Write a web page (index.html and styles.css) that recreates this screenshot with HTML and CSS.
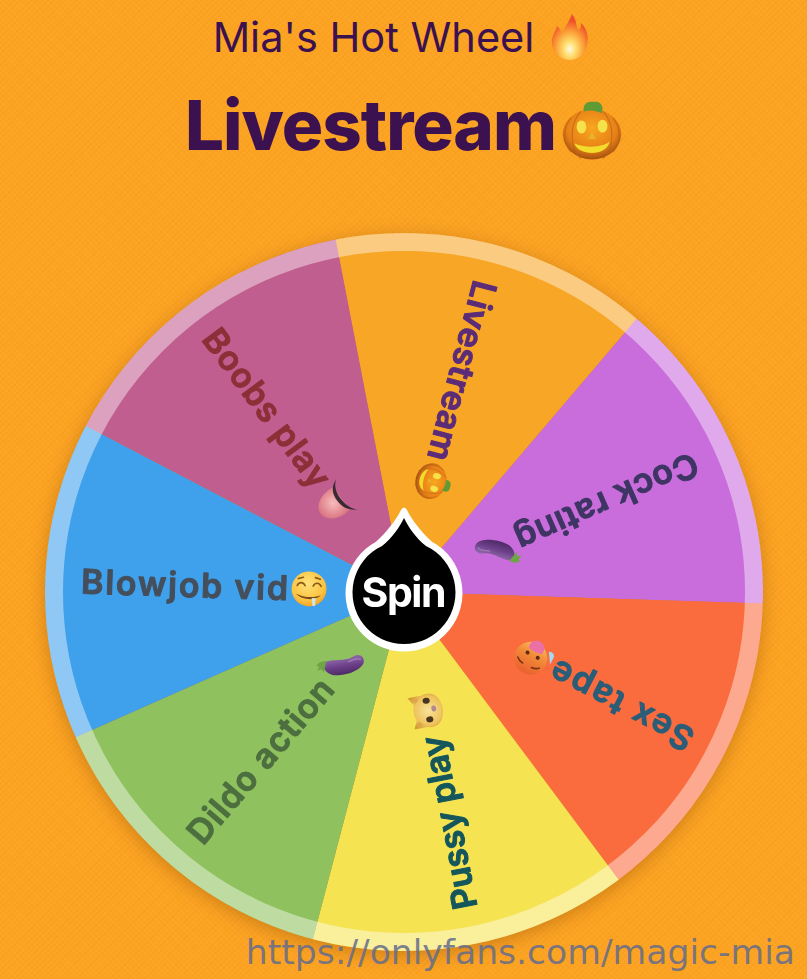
FILE: index.html
```html
<!DOCTYPE html>
<html lang="en">
<head>
    <meta charset="UTF-8">
    <meta name="viewport" content="width=device-width, initial-scale=1.0">
    <title>Mia's Hot Wheel</title>
    <link rel="stylesheet" href="styles.css">
</head>
<body>
    <!-- shared emoji drawings, each about 36 units wide around 0,0 -->
    <svg class="sprite" aria-hidden="true">
        <defs>
            <radialGradient id="pumpkinSkin" cx="50%" cy="38%" r="62%">
                <stop offset="0" stop-color="#f9a620"/>
                <stop offset="0.68" stop-color="#e88116"/>
                <stop offset="1" stop-color="#a4500f"/>
            </radialGradient>
            <linearGradient id="eggSkin" x1="0" y1="0" x2="0" y2="1">
                <stop offset="0" stop-color="#8f6aa8"/>
                <stop offset="0.5" stop-color="#6d3f8a"/>
                <stop offset="1" stop-color="#4c2a63"/>
            </linearGradient>
            <radialGradient id="faceSkin" cx="45%" cy="35%" r="70%">
                <stop offset="0" stop-color="#ffe27a"/>
                <stop offset="0.7" stop-color="#fbc23f"/>
                <stop offset="1" stop-color="#ef9a22"/>
            </radialGradient>
            <linearGradient id="hotSkin" x1="0" y1="0" x2="0" y2="1">
                <stop offset="0" stop-color="#e9602f"/>
                <stop offset="0.6" stop-color="#f28a38"/>
                <stop offset="1" stop-color="#f9bb58"/>
            </linearGradient>
            <radialGradient id="catSkin" cx="50%" cy="55%" r="60%">
                <stop offset="0" stop-color="#f8e29a"/>
                <stop offset="0.7" stop-color="#eec35c"/>
                <stop offset="1" stop-color="#d79c38"/>
            </radialGradient>
            <radialGradient id="tongueSkin" cx="45%" cy="40%" r="60%">
                <stop offset="0" stop-color="#f7bcbc"/>
                <stop offset="1" stop-color="#d9727f"/>
            </radialGradient>
            <radialGradient id="fireCore" cx="50%" cy="76%" r="62%">
                <stop offset="0" stop-color="#fffbe0"/>
                <stop offset="0.28" stop-color="#ffdc6a"/>
                <stop offset="0.65" stop-color="#fb9a35"/>
                <stop offset="1" stop-color="#ef4f2c"/>
            </radialGradient>

            <g id="pumpkin">
                <ellipse cx="0" cy="0" rx="18" ry="15.5" fill="url(#pumpkinSkin)"/>
                <path class="pumpkin-stem" d="M-5 -14 C-6 -18 -3 -20 -1 -20 L3 -20 C7 -19 7 -15 6 -13 C2 -15 -2 -15 -5 -14 Z"/>
                <path class="pumpkin-rib" d="M-7 -14 C-14 -6 -14 8 -7 15 M7 -14 C14 -6 14 8 7 15 M-13 -10 C-18 -4 -18 5 -13 11 M13 -10 C18 -4 18 5 13 11"/>
                <ellipse class="pumpkin-eye" cx="-6.5" cy="-4.5" rx="3" ry="4"/>
                <ellipse class="pumpkin-eye" cx="6.5" cy="-5" rx="3" ry="4"/>
                <path class="pumpkin-nose" d="M0 -1 L2.6 3 L-2.6 3 Z"/>
                <path class="pumpkin-mouth" d="M-11 5.5 C-5 8.5 6 8.5 11 4.5 C9.5 9.5 5 11.5 0 11.5 C-5 11.5 -9.5 9.5 -11 5.5 Z"/>
            </g>

            <g id="eggplant" transform="rotate(40)">
                <path fill="url(#eggSkin)" d="M-16 -6 C-8 -9 4 -3 13 -7 C19 -10 25 -6 23 0 C20 8 2 11 -9 8 C-15 6 -20 -1 -16 -6 Z"/>
                <path class="egg-shine" d="M8 -3 C13 -4 18 -6 20 -3"/>
                <path class="egg-stem" d="M-14 -7 C-18 -8 -23 -7 -24 -4 L-22 -3 L-24 1 L-20 0 L-18 4 C-17 0 -15 -3 -14 -7 Z"/>
            </g>

            <g id="tongue">
                <path fill="url(#tongueSkin)" d="M-12 -7 C-6 -5 8 -5 15 -7 C18 2 14 18 3 20 C-9 21 -15 6 -12 -7 Z"/>
                <path class="tongue-lip" d="M-17 -13 C-13 -7 -6 -5 1 -5 C8 -5 16 -7 21 -13 C15 -3 8 -1 1 -1 C-7 -1 -14 -4 -17 -13 Z"/>
            </g>

            <g id="drool">
                <circle r="17.5" fill="url(#faceSkin)"/>
                <path class="face-line" d="M-12 -3 C-10 -7 -6 -7 -4 -3 M4 -3 C6 -7 10 -7 12 -3"/>
                <path class="face-line" d="M-11 -10 L-6 -11.5 M6 -11.5 L11 -10"/>
                <path class="face-mouth" d="M-13 5 C-6 9 6 9 12 6 C8 11.5 -7 12 -13 5 Z"/>
                <path class="face-drip" d="M3 9 L7 9 L6.5 17 L4 17 Z"/>
            </g>

            <g id="hotface">
                <circle r="16.5" fill="url(#hotSkin)"/>
                <path class="hot-line" d="M-12 -5 C-10 -7 -7 -8 -5 -8 M5 -8 C7 -8 10 -7 12 -5"/>
                <circle class="hot-eye" cx="-6" cy="3.5" r="2"/>
                <circle class="hot-eye" cx="5.5" cy="3.5" r="2"/>
                <path class="hot-tongue" d="M-8 9 C-5 7 4 7 7 9 C8 15 5 19 -1 19 C-7 19 -9 14 -8 9 Z"/>
                <path class="hot-drop" d="M-20 3 C-18 7 -15 11 -13 14 C-16 16 -20 14 -20 11 Z"/>
            </g>

            <g id="cat">
                <path fill="url(#catSkin)" d="M-16 -16 L-8 -12 C-3 -14 3 -14 8 -12 L16 -17 L16 -3 C19 6 15 15 0 16 C-15 15 -19 6 -16 -3 Z"/>
                <path class="cat-ear" d="M-14 -13 L-9 -10 L-13 -6 Z M14 -13 L9 -10 L13 -6 Z"/>
                <ellipse class="cat-eye" cx="-9" cy="1" rx="3" ry="3.6"/>
                <ellipse class="cat-eye" cx="10" cy="1" rx="3" ry="3.6"/>
                <ellipse class="cat-nose" cx="1" cy="7" rx="3" ry="2.4"/>
            </g>
        </defs>
    </svg>

    <main class="page">
        <header class="titles">
            <p class="wheel-name">
                <span>Mia's Hot Wheel</span>
                <svg class="fire" viewBox="-19 -24 38 48" aria-hidden="true">
                    <path fill="url(#fireCore)" d="M2 -23 C8 -15 5 -10 9 -7 C11 -9 11 -12 11 -14 C17 -8 19 0 17 8 C15 18 7 23 0 23 C-9 23 -17 16 -18 7 C-19 -1 -14 -6 -13 -11 C-10 -9 -9 -6 -8 -4 C-5 -10 -1 -15 2 -23 Z"/>
                </svg>
            </p>
            <h1 class="result">
                <span>Livestream</span>
                <svg class="result-emoji" viewBox="-18.5 -20.5 37 37" aria-hidden="true"><use href="#pumpkin"/></svg>
            </h1>
        </header>

        <svg class="wheel" viewBox="-375 -375 750 750" role="img" aria-label="Prize wheel">
            <g class="slices">
                <g transform="rotate(14.7)">
                    <path class="slice slice-orange" d="M0 0 L-155.8 -323.4 A359 359 0 0 1 155.8 -323.4 Z"/>
                </g>
                <g transform="rotate(66.13)">
                    <path class="slice slice-purple" d="M0 0 L-155.8 -323.4 A359 359 0 0 1 155.8 -323.4 Z"/>
                </g>
                <g transform="rotate(117.56)">
                    <path class="slice slice-red" d="M0 0 L-155.8 -323.4 A359 359 0 0 1 155.8 -323.4 Z"/>
                </g>
                <g transform="rotate(169)">
                    <path class="slice slice-yellow" d="M0 0 L-155.8 -323.4 A359 359 0 0 1 155.8 -323.4 Z"/>
                </g>
                <g transform="rotate(220.43)">
                    <path class="slice slice-green" d="M0 0 L-155.8 -323.4 A359 359 0 0 1 155.8 -323.4 Z"/>
                </g>
                <g transform="rotate(271.86)">
                    <path class="slice slice-blue" d="M0 0 L-155.8 -323.4 A359 359 0 0 1 155.8 -323.4 Z"/>
                </g>
                <g transform="rotate(323.3)">
                    <path class="slice slice-pink" d="M0 0 L-155.8 -323.4 A359 359 0 0 1 155.8 -323.4 Z"/>
                </g>
            </g>
            <circle class="rim" r="350"/>

            <!-- local +x points at the hub, so labels read inwards -->
            <g transform="rotate(104.7)">
                <text class="label label-livestream" x="-321" y="12" textLength="185">Livestream</text>
                <use href="#pumpkin" transform="translate(-114 2)"/>
            </g>
            <g transform="rotate(156.13)">
                <text class="label label-cock" x="-320" y="12" textLength="196">Cock rating</text>
                <use href="#eggplant" transform="translate(-103 0)"/>
            </g>
            <g transform="rotate(207.56)">
                <text class="label label-sex" x="-324" y="12" textLength="157">Sex tape</text>
                <use href="#hotface" transform="translate(-143 0)"/>
            </g>
            <g transform="rotate(259)">
                <text class="label label-pussy" x="-323" y="12" textLength="176">Pussy play</text>
                <use href="#cat" transform="translate(-121 0)"/>
            </g>
            <g transform="rotate(310.43)">
                <text class="label label-dildo" x="-324" y="12" textLength="205">Dildo action</text>
                <use href="#eggplant" transform="translate(-97 0)"/>
            </g>
            <g transform="rotate(1.86)">
                <text class="label label-blowjob" x="-323" y="12" textLength="207">Blowjob vid</text>
                <use href="#drool" transform="translate(-95 0)"/>
            </g>
            <g transform="rotate(53.3)">
                <text class="label label-boobs" x="-324" y="12" textLength="189">Boobs play</text>
                <use href="#tongue" transform="translate(-114 0)"/>
            </g>

            <g class="hub" transform="translate(0 1)">
                <path class="pointer-edge" d="M-3 -83 Q0 -88 3 -83 C8 -73 18 -60 28 -51.3 A58.5 58.5 0 1 1 -28 -51.3 C-18 -60 -8 -73 -3 -83 Z"/>
                <path class="pointer" d="M0 -75 C5 -65 12 -55 22 -47 A51.5 51.5 0 1 1 -22 -47 C-12 -55 -5 -65 0 -75 Z"/>
                <text class="spin" x="0" y="14" text-anchor="middle" textLength="85">Spin</text>
            </g>
        </svg>

        <div class="watermark">https://onlyfans.com/magic-mia</div>
    </main>
</body>
</html>
```

FILE: styles.css
```css
html, body {
    margin: 0;
    padding: 0;
}

body {
    background-color: #fca322;
    background-image:
        repeating-linear-gradient(45deg, rgba(255, 255, 255, 0.035) 0 1px, transparent 1px 4px),
        repeating-linear-gradient(-45deg, rgba(170, 80, 0, 0.05) 0 1px, transparent 1px 4px);
}

.sprite {
    position: absolute;
    width: 0;
    height: 0;
}

.page {
    position: relative;
    display: flex;
    flex-direction: column;
    align-items: center;
    height: 979px;
    overflow: hidden;
}

/* Heading */
.titles {
    display: flex;
    flex-direction: column;
    align-items: center;
    height: 217px;
    color: #3b1150;
}

.wheel-name {
    display: flex;
    align-items: center;
    gap: 17px;
    margin: 13px 0 0 -5px;
    font-family: Inter, "Liberation Sans", sans-serif;
    font-size: 41.5px;
    line-height: 48px;
}

.fire {
    width: 38px;
    height: 48px;
}

.result {
    display: flex;
    align-items: center;
    gap: 6px;
    margin: 24px 0 0;
    font-family: Inter, "Liberation Sans", sans-serif;
    font-size: 69px;
    font-weight: 800;
    line-height: 80px;
    letter-spacing: -1px;
}

.result-emoji {
    width: 60px;
    height: 60px;
    margin-top: 12px;
}

/* Wheel */
.wheel {
    flex: none;
    width: 750px;
    height: 750px;
    filter: drop-shadow(0 4px 9px rgba(120, 60, 0, 0.35));
}

.slice-orange { fill: #f7a625; }
.slice-purple { fill: #c96cdc; }
.slice-red { fill: #fa6c3e; }
.slice-yellow { fill: #f6e352; }
.slice-green { fill: #8fc25f; }
.slice-blue { fill: #3fa0ec; }
.slice-pink { fill: #c15e90; }

.rim {
    fill: none;
    stroke: #fff;
    stroke-width: 18;
    stroke-opacity: 0.42;
}

.label {
    font-family: Inter, "Liberation Sans", sans-serif;
    font-size: 34px;
    font-weight: 600;
    stroke-width: 1;
    stroke-linejoin: round;
}

.label-livestream { fill: #5c2c78; stroke: #5c2c78; }
.label-cock { fill: #3e3564; stroke: #3e3564; }
.label-sex { fill: #2a5d78; stroke: #2a5d78; }
.label-pussy { fill: #14565c; stroke: #14565c; }
.label-dildo { fill: #4d6f3f; stroke: #4d6f3f; }
.label-blowjob { fill: #454f5c; stroke: #454f5c; }
.label-boobs { fill: #8c3038; stroke: #8c3038; }

.pointer-edge {
    fill: #fff;
}

.pointer {
    fill: #000;
}

.spin {
    fill: #fff;
    font-family: Inter, "Liberation Sans", sans-serif;
    font-size: 41px;
    font-weight: 700;
}

/* Emoji parts */
.pumpkin-stem { fill: #5f9a35; }
.pumpkin-rib { fill: none; stroke: #b8601a; stroke-width: 0.8; opacity: 0.6; }
.pumpkin-eye { fill: #f5e24a; }
.pumpkin-nose { fill: #e9b22c; }
.pumpkin-mouth { fill: #f4dc2c; }
.egg-shine { fill: none; stroke: #b08ec6; stroke-width: 1.5; stroke-linecap: round; opacity: 0.6; }
.egg-stem { fill: #6fa544; }
.tongue-lip { fill: #3a2a33; }
.face-line { fill: none; stroke: #8a5a1c; stroke-width: 1.6; stroke-linecap: round; }
.face-mouth { fill: #7a4a1a; }
.face-drip { fill: #cfe6e6; }
.hot-line { fill: none; stroke: #7a3414; stroke-width: 1.6; stroke-linecap: round; }
.hot-eye { fill: #5d2a12; }
.hot-tongue { fill: #ec6fa6; }
.hot-drop { fill: #a6dcf2; }
.cat-ear { fill: #d9a64c; }
.cat-eye { fill: #4a3520; }
.cat-nose { fill: #b08a90; }

/* Site overlay */
.watermark {
    position: absolute;
    right: 12px;
    bottom: 7px;
    font-family: "DejaVu Sans", sans-serif;
    font-size: 34.6px;
    line-height: 40px;
    color: rgba(100, 108, 140, 0.85);
}
```
